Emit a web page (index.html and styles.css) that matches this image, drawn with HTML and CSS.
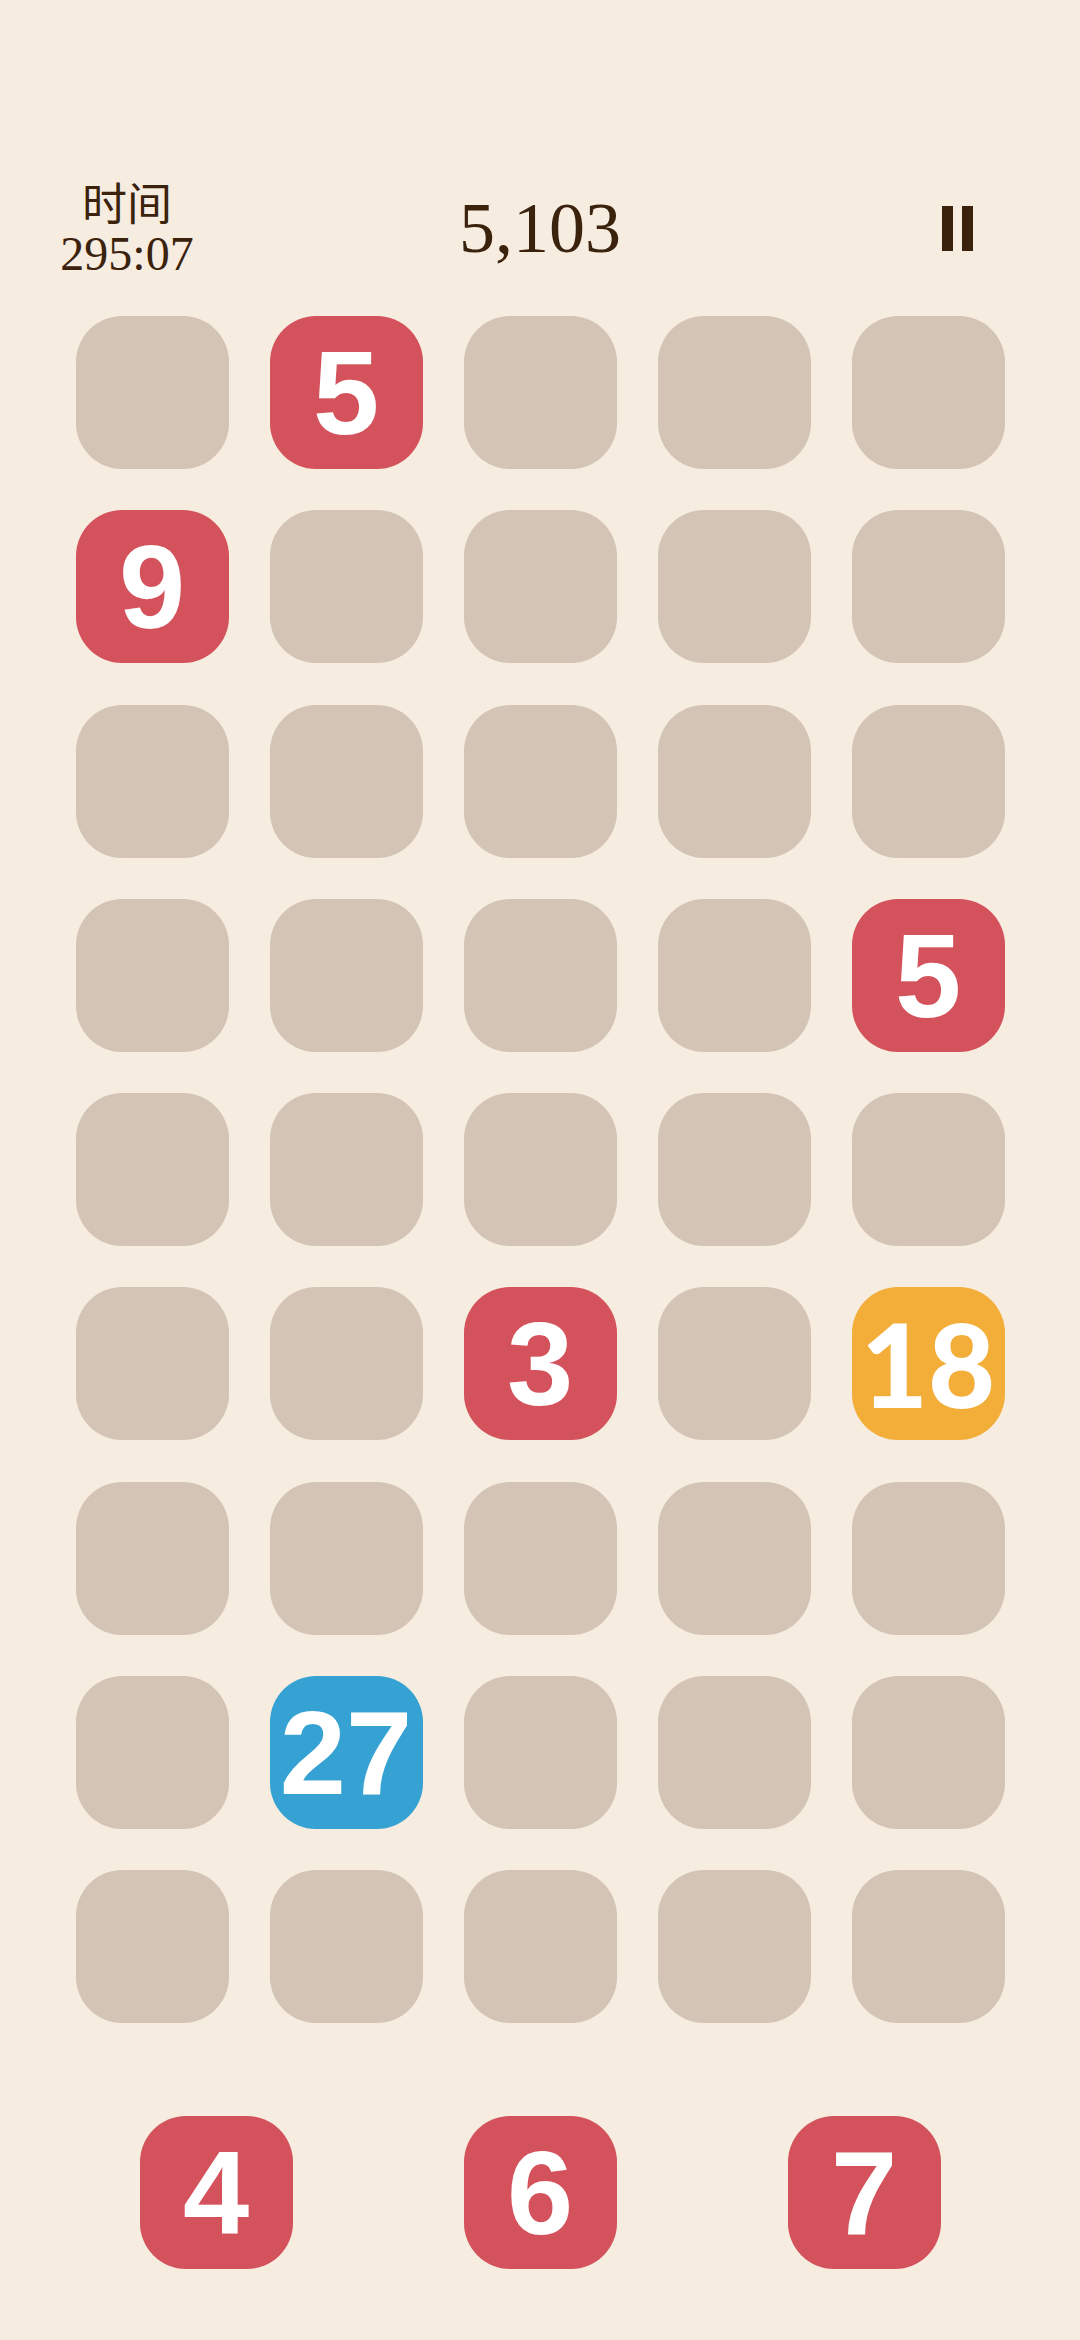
FILE: index.html
```html
<!DOCTYPE html>
<html>
<head>
    <meta charset="utf-8">
    <link rel="stylesheet" href="styles.css">
</head>
<body>
    <div class="page">
        <div class="header">
            <div class="timer">
                <div class="timer-label">时间</div>
                <div class="timer-value">295:07</div>
            </div>
            <div class="score">5,103</div>
            <div class="pause-wrap">
                <div class="pause">
                    <span class="bar"></span>
                    <span class="bar"></span>
                </div>
            </div>
        </div>

        <div class="board">
            <div class="tile"></div>
            <div class="tile red">5</div>
            <div class="tile"></div>
            <div class="tile"></div>
            <div class="tile"></div>

            <div class="tile red">9</div>
            <div class="tile"></div>
            <div class="tile"></div>
            <div class="tile"></div>
            <div class="tile"></div>

            <div class="tile"></div>
            <div class="tile"></div>
            <div class="tile"></div>
            <div class="tile"></div>
            <div class="tile"></div>

            <div class="tile"></div>
            <div class="tile"></div>
            <div class="tile"></div>
            <div class="tile"></div>
            <div class="tile red">5</div>

            <div class="tile"></div>
            <div class="tile"></div>
            <div class="tile"></div>
            <div class="tile"></div>
            <div class="tile"></div>

            <div class="tile"></div>
            <div class="tile"></div>
            <div class="tile red">3</div>
            <div class="tile"></div>
            <div class="tile orange lato">18</div>

            <div class="tile"></div>
            <div class="tile"></div>
            <div class="tile"></div>
            <div class="tile"></div>
            <div class="tile"></div>

            <div class="tile"></div>
            <div class="tile blue">27</div>
            <div class="tile"></div>
            <div class="tile"></div>
            <div class="tile"></div>

            <div class="tile"></div>
            <div class="tile"></div>
            <div class="tile"></div>
            <div class="tile"></div>
            <div class="tile"></div>
        </div>

        <div class="next">
            <div class="tile red">4</div>
            <div class="tile red">6</div>
            <div class="tile red">7</div>
        </div>
    </div>
</body>
</html>
```

FILE: styles.css
```css
html, body {
    margin: 0;
    padding: 0;
    background: #f6ecdf;
}

.page {
    width: 1080px;
    height: 2340px;
    padding-top: 168px;
    box-sizing: border-box;
    color: #3a220d;
}

.header {
    display: grid;
    grid-template-columns: 254px 1fr 254px;
    align-items: center;
    height: 120px;
}

.timer {
    display: flex;
    flex-direction: column;
    align-items: center;
}

.timer-label {
    font-family: "Liberation Serif", "Noto Sans CJK SC", serif;
    font-size: 45px;
    line-height: 52px;
}

.timer-value {
    font-family: "Liberation Serif", serif;
    font-size: 48px;
    line-height: 44px;
}

.score {
    text-align: center;
    font-family: "Liberation Serif", serif;
    font-size: 72px;
    line-height: 80px;
}

.pause-wrap {
    display: flex;
    justify-content: center;
}

.pause {
    display: flex;
    gap: 9px;
    margin-left: 8px;
}

.pause .bar {
    width: 11px;
    height: 45px;
    background: #3a220d;
}

.board {
    display: grid;
    grid-template-columns: repeat(5, 153px);
    grid-auto-rows: 153px;
    column-gap: 41px;
    row-gap: 41.3px;
    justify-content: center;
    margin-top: 28px;
}

.tile {
    width: 153px;
    height: 153px;
    border-radius: 46px;
    background: #d3c4b5;
    display: flex;
    align-items: center;
    justify-content: center;
    color: #fff;
    font-family: "Liberation Sans", Arial, sans-serif;
    font-weight: bold;
    font-size: 119px;
    line-height: 1;
}

.tile.red {
    background: #d4525b;
}

.tile.orange {
    background: #f3ae3a;
}

.tile.blue {
    background: #35a2d3;
}

.tile.lato {
    font-family: Lato, sans-serif;
    font-weight: 900;
    font-size: 116px;
}

.next {
    display: flex;
    justify-content: center;
    gap: 171px;
    margin-top: 93px;
}
```
